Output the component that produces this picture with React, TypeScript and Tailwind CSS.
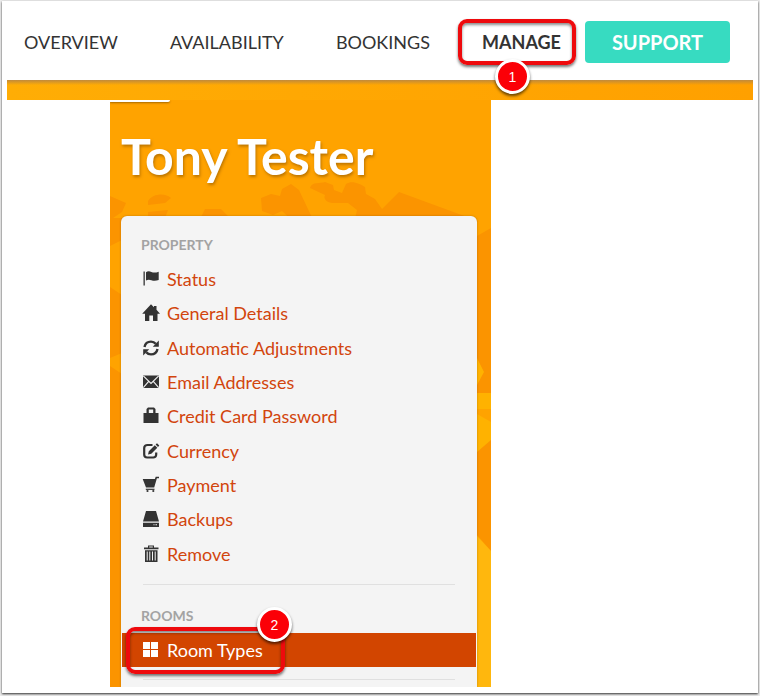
import type { ReactNode } from "react";

type IconName = "flag" | "home" | "refresh" | "mail" | "lock" | "edit" | "cart" | "drive" | "trash" | "grid";

const shapes: Record<IconName, ReactNode> = {
  flag: (
    <>
      <path d="M.5 .5h1.300v14H.5z" />
      <path d="M3 1.200c1.800-1.200 3.500-1 5.400-.2 2.200 .9 4.600 .7 7.300-.3v8.300c-2.700 1-5.100 1-7.300.2-1.900-.7-3.600-.8-5.400.3z" />
    </>
  ),
  home: <path d="M8-.8L11 2.200V1h2.500v3.700L17 8.700H14.500V16H10v-5.500H6.300V16H2V8.700H-.8z" />,
  refresh: (
    <>
      <path d="M1.500 7C2.200 3.500 4.800 1.600 8 1.600c2 0 3.600.8 4.700 2.200" fill="none" stroke="currentColor" strokeWidth="2.400" />
      <path d="M15.800.6v6.200H9.800z" />
      <path d="M14.500 9C13.800 12.500 11.200 14.400 8 14.400c-2 0-3.600-.8-4.700-2.200" fill="none" stroke="currentColor" strokeWidth="2.400" />
      <path d="M.2 15.400V9.200h6z" />
    </>
  ),
  mail: (
    <>
      <path d="M0 1.500h16v12.500H0z" />
      <path d="M.3 1.800L8 9.500l7.700-7.700M.3 13.700l5.200-6M15.700 13.700l-5.200-6" fill="none" stroke="#f4f4f4" strokeWidth="1.100" />
    </>
  ),
  lock: <path d="M5-.5h6l1.500 1.500V5H15.500v10H.5V5h3V1zM5.800 1.500V5h4.400V1.500z" fillRule="evenodd" />,
  edit: (
    <>
      <path d="M9.500 2H4.500C2.500 2 1.200 3.300 1.200 5v6.500c0 1.700 1.300 3 3 3h6c1.800 0 3-1.200 3-3V9.500" fill="none" stroke="currentColor" strokeWidth="2.200" />
      <path d="M5 11.500l.8-3.300 6-6 2.500 2.500-6 6zM12.600 1.500L14 .2 16.300 2.500 15 3.900z" />
    </>
  ),
  cart: (
    <>
      <path d="M-.3 2h12.200l.8-2.300H16v1.500h-2.100L11.200 10.500H3z" />
      <path d="M2.800 11.700h8.700v1.200H2.800z" />
      <circle cx="4.500" cy="14" r="1.100" />
      <circle cx="10.300" cy="14" r="1.100" />
    </>
  ),
  drive: <path d="M3 0h10l3 10.500H0zM0 11.800h16V16H0zM10.500 13.300v1h1v-1zM12.500 13.300v1h1.500v-1z" fillRule="evenodd" />,
  trash: (
    <path d="M5-.5h6v2h4.500v1.800H1V1.500h4zM6.200.5v1h3.600v-1zM2 4.300h12.500V16H2zM3.700 5.600v9h1v-9zM6.300 5.600v9h1v-9zM9 5.600v9h1v-9zM11.700 5.600v9h1v-9z" fillRule="evenodd" />
  ),
  grid: <path d="M0 0h7v7H0zM8 0h7v7H8zM0 8h7v7H0zM8 8h7v7H8z" />,
};

function Icon({ name }: { name: IconName }) {
  return (
    <svg viewBox="0 0 16 16" className="size-4 shrink-0 overflow-visible" fill="currentColor" aria-hidden="true">
      {shapes[name]}
    </svg>
  );
}

const propertyLinks: { icon: IconName; label: string }[] = [
  { icon: "flag", label: "Status" },
  { icon: "home", label: "General Details" },
  { icon: "refresh", label: "Automatic Adjustments" },
  { icon: "mail", label: "Email Addresses" },
  { icon: "lock", label: "Credit Card Password" },
  { icon: "edit", label: "Currency" },
  { icon: "cart", label: "Payment" },
  { icon: "drive", label: "Backups" },
  { icon: "trash", label: "Remove" },
];

function Step({ n, className }: { n: number; className: string }) {
  return (
    <span
      className={
        "absolute flex size-[35px] items-center justify-center rounded-full border-[3px] border-white bg-[#fb0007] font-['Liberation_Sans',sans-serif] text-sm font-normal text-white shadow-[0_2px_3px_rgba(0,0,0,0.6)] " +
        className
      }
    >
      {n}
    </span>
  );
}

const outline =
  "absolute rounded-[9px] border-4 border-[#ee0a0d] shadow-[0_2px_3px_rgba(0,0,0,0.55),inset_0_2px_3px_rgba(0,0,0,0.45)]";

export default function App() {
  return (
    <div className="min-h-screen bg-[#ececec] pt-px pr-[2px] pb-[3px] pl-[2px] font-[Lato,sans-serif]">
      <div className="bg-white px-[5px] pb-[6px] shadow-[0_1px_2px_rgba(0,0,0,0.8)]">
        <header className="relative z-10 flex h-[79px] items-center justify-between pt-[3px] pr-[23px] pl-[17px] text-lg text-[#333]">
          <nav className="contents">
            <a href="#overview">OVERVIEW</a>
            <a href="#availability">AVAILABILITY</a>
            <a href="#bookings">BOOKINGS</a>
            <a href="#manage" className="relative font-bold">
              MANAGE
              <span className={outline + " -top-[9px] -right-[15px] -bottom-[9px] -left-[24px]"} />
              <Step n={1} className="top-[31px] left-[13px]" />
            </a>
          </nav>
          <button className="-ml-7 h-[42px] w-[145px] rounded bg-[#37dbc1] text-xl font-bold text-white">SUPPORT</button>
        </header>
        <div className="h-5 bg-linear-to-r from-[#ffad05] to-[#ffa000]">
          <div className="h-[5px] bg-linear-to-b from-[#c08a3c] to-transparent" />
        </div>

        <main className="relative isolate ml-[103px] w-[381px] overflow-hidden bg-[#ffa300] px-[11px]">
          <svg className="absolute inset-0 -z-10 size-full" viewBox="0 0 381 587" preserveAspectRatio="none" aria-hidden="true">
            <g fill="#fb9400">
              <path d="M0 96l16 7-4 9-12 8zM38 101c5-8 18-8 23-3l-6 5-17 2zM38 112l20-2-3 8-8 3-9-4zM90 119l5-10h16l9 9 2 8H90z" />
              <path d="M151 98l10-4 9 2 2-7 9-5 8 6 17 36h-18l-16-15-9 4-11-4zM141 124l6-2 6 4h-12z" />
              <path d="M200 88c2-7 10-4 15-6l8 3 1 5 8 3 4-9c6-4 14 0 19 3l1 7 9 5 7 10 12-12 5-5 79 29-4 5h-90l-3-6-12 7c-8 0-12-3-14-8l2-9-9-7-15 0c-6 0-10-4-8-8z" />
              <path d="M0 118h12v22L0 146zM0 187l12 8v58L0 258zM0 266l12 8v313H0zM367 136l14-8v165h-14zM367 340l14-6v117l-14-16z" />
            </g>
            <path d="M367 436l14 15v136h-14z" fill="#ffb70d" />
            <path d="M367 258l7 14-7 13zM367 293h14v16h-14zM367 314l14 8v18l-14 12z" fill="#ffb200" />
          </svg>
          <div className="absolute top-0 left-0 h-[2px] w-[60px] rounded-br-full bg-white shadow-[0_1px_2px_rgba(100,60,0,0.6)]" />
          <h1 className="h-[116px] pt-[26px] text-[50px] leading-[60px] font-bold text-white [text-shadow:1px_2px_3px_rgba(120,70,0,0.5)]">
            Tony Tester
          </h1>
          <aside className="mr-[3px] rounded-t-md bg-[#f4f4f4] px-px pt-[18px] pb-[7px] shadow-[0_0_2px_rgba(120,70,0,0.5)]">
            <h2 className="px-[19px] text-sm leading-[22px] font-bold text-[#a3a3a3]">PROPERTY</h2>
            <ul className="mt-[5px] grid h-[310px] auto-rows-fr pt-px text-lg text-[#d2450d]">
              {propertyLinks.map((item) => (
                <li key={item.label}>
                  <a href="#item" className="flex h-full items-center gap-2 px-[21px]">
                    <span className="text-[#333]">
                      <Icon name={item.icon} />
                    </span>
                    {item.label}
                  </a>
                </li>
              ))}
            </ul>
            <hr className="mx-[21px] mt-[13px] border-[#e0e0e0]" />
            <h2 className="mt-5 px-[19px] text-sm leading-[22px] font-bold text-[#a3a3a3]">ROOMS</h2>
            <a href="#rooms" className="relative mt-[6px] flex h-[34px] items-center gap-2 bg-[#d24500] px-[21px] text-lg text-white">
              <Icon name="grid" />
              Room Types
              <span className={outline + " -top-[6px] -bottom-[7px] left-1 w-[159px]"} />
              <Step n={2} className="-top-[26px] left-[135px]" />
            </a>
            <hr className="mx-[21px] mt-3 border-[#e0e0e0]" />
          </aside>
        </main>
      </div>
    </div>
  );
}
